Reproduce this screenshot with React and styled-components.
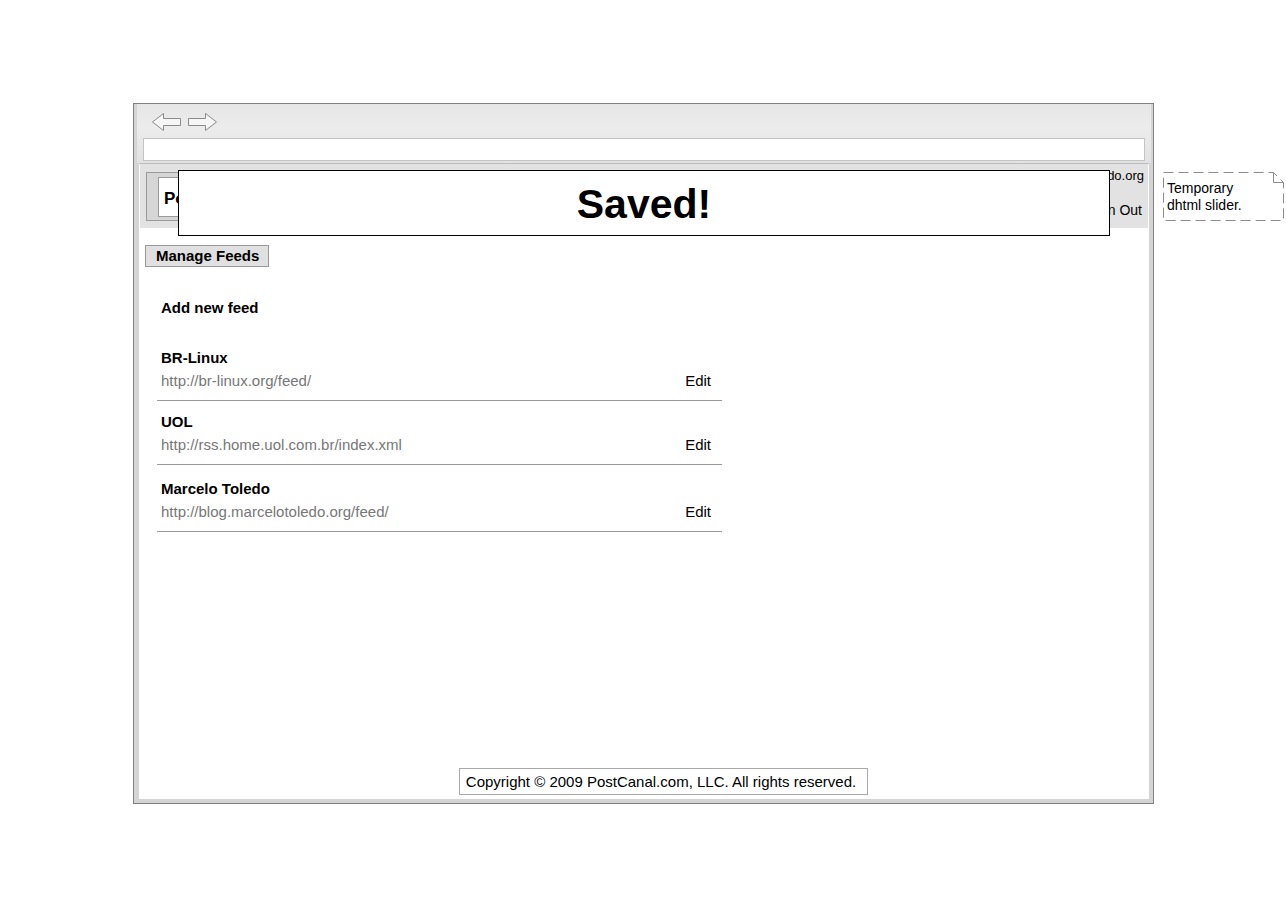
import React from "react";
import styled, { createGlobalStyle } from "styled-components";

const GlobalStyle = createGlobalStyle`
  body {
    margin: 0;
    background: #fff;
    font-family: "Liberation Sans", Arial, Helvetica, sans-serif;
    color: #000;
  }
`;

const feeds = [
  { name: "BR-Linux", url: "http://br-linux.org/feed/", top: 13, height: 65 },
  { name: "UOL", url: "http://rss.home.uol.com.br/index.xml", top: 12, height: 64 },
  { name: "Marcelo Toledo", url: "http://blog.marcelotoledo.org/feed/", top: 15, height: 67 },
];

const Arrow = ({ flip }) => (
  <svg width="29" height="18" viewBox="0 0 29 18" style={{ transform: flip ? "scaleX(-1)" : "none" }}>
    <polygon
      points="0.5,9 11.5,0.5 11.5,5.5 28.5,5.5 28.5,12.5 11.5,12.5 11.5,17.5"
      fill="#f6f6f6"
      stroke="#8a8a8a"
      strokeWidth="1"
    />
  </svg>
);

const App = () => {
  return (
    <>
      <GlobalStyle />
      <Page>
        <Frame>
          <Toolbar>
            <NavRow>
              <Arrow />
              <Arrow flip />
            </NavRow>
            <AddressBar />
          </Toolbar>
          <Content>
            <Header>
              <LogoBox>
                <LogoInner>PostCanal</LogoInner>
              </LogoBox>
              <UserBox>
                <UserEmail>marcelo@marcelotoledo.org</UserEmail>
                <SignOut>Sign Out</SignOut>
              </UserBox>
            </Header>
            <SavedBox>Saved!</SavedBox>

            <ManageButton>Manage Feeds</ManageButton>
            <AddFeed>Add new feed</AddFeed>

            <FeedList>
              {feeds.map((f) => (
                <FeedItem key={f.name} $top={f.top} $height={f.height}>
                  <FeedName>{f.name}</FeedName>
                  <FeedRow>
                    <FeedUrl>{f.url}</FeedUrl>
                    <EditLink>Edit</EditLink>
                  </FeedRow>
                </FeedItem>
              ))}
            </FeedList>

            <Footer>
              <Copyright>Copyright © 2009 PostCanal.com, LLC. All rights reserved.</Copyright>
            </Footer>
          </Content>
        </Frame>

        <Note>
          <svg width="121" height="49" viewBox="0 0 121 49" style={{ position: "absolute", left: 0, top: 0 }}>
            <path
              d="M0.5,0.5 H110.5 L120.5,10.5 V48.5 H0.5 Z"
              fill="none"
              stroke="#8c8c8c"
              strokeDasharray="10 5"
            />
            <path d="M110.5,0.5 V10.5 H120.5" fill="none" stroke="#8c8c8c" />
          </svg>
          <NoteText>
            Temporary
            <br />
            dhtml slider.
          </NoteText>
        </Note>
      </Page>
    </>
  );
};

export default App;

const Page = styled.div`
  display: flex;
  align-items: flex-start;
  gap: 9px;
  padding: 103px 0 0 133px;
`;

const Frame = styled.div`
  width: 1010px;
  border: 1px solid #808080;
  background: #d4d4d4;
  padding: 0 4px 4px 5px;
`;

const Toolbar = styled.div`
  height: 59px;
  box-sizing: border-box;
  margin: 0 -2px 0 -2px;
  padding: 0 6px 2px 6px;
  background: linear-gradient(#e6e6e6, #ececec 40%, #e2e2e2);
  display: flex;
  flex-direction: column;
`;

const NavRow = styled.div`
  height: 34px;
  display: flex;
  align-items: center;
  gap: 7px;
  padding-left: 9px;
  padding-top: 1px;
  box-sizing: border-box;
`;

const AddressBar = styled.div`
  height: 23px;
  box-sizing: border-box;
  background: #fff;
  border: 1px solid #c4c4c4;
`;

const Content = styled.div`
  position: relative;
  height: 636px;
  background: #fff;
  border-top: 1px solid #bdbdbd;
  box-sizing: border-box;
  display: flex;
  flex-direction: column;
`;

const Header = styled.div`
  height: 64px;
  margin: 0 1px;
  background: #e2e2e2;
  display: flex;
  justify-content: space-between;
  align-items: flex-start;
  padding: 8px 4px 0 6px;
  box-sizing: border-box;
`;

const LogoBox = styled.div`
  width: 220px;
  height: 49px;
  box-sizing: border-box;
  border: 1px solid #9a9a9a;
  background: #d6d6d6;
  padding: 4px 11px;
`;

const LogoInner = styled.div`
  height: 40px;
  box-sizing: border-box;
  background: #fff;
  border: 1px solid #9a9a9a;
  display: flex;
  align-items: center;
  padding: 3px 0 0 5px;
  font-size: 17px;
  font-weight: bold;
`;

const UserBox = styled.div`
  display: flex;
  flex-direction: column;
  align-items: flex-end;
  gap: 19px;
  margin-top: -4px;
`;

const UserEmail = styled.div`
  font-size: 13px;
  line-height: 15px;
`;

const SignOut = styled.div`
  font-size: 14px;
  line-height: 16px;
  margin-right: 2px;
`;

const SavedBox = styled.div`
  position: absolute;
  left: 39px;
  top: 6px;
  width: 932px;
  height: 66px;
  box-sizing: border-box;
  border: 1px solid #000;
  background: #fff;
  display: flex;
  align-items: center;
  justify-content: center;
  font-size: 41px;
  font-weight: bold;
  padding-top: 2px;
`;

const ManageButton = styled.div`
  align-self: flex-start;
  margin: 17px 0 0 6px;
  height: 22px;
  box-sizing: border-box;
  padding: 0 9px 0 10px;
  background: #e0e0e0;
  border: 1px solid #9a9a9a;
  font-size: 15px;
  font-weight: bold;
  line-height: 20px;
`;

const AddFeed = styled.div`
  margin: 32px 0 0 22px;
  font-size: 15px;
  font-weight: bold;
  line-height: 18px;
`;

const FeedList = styled.div`
  margin: 19px 0 0 18px;
  width: 565px;
`;

const FeedItem = styled.div`
  padding: ${(p) => p.$top}px 10px 0 4px;
  border-bottom: 1px solid #9a9a9a;
  height: ${(p) => p.$height}px;
  box-sizing: border-box;
`;

const FeedName = styled.div`
  font-size: 15px;
  font-weight: bold;
  line-height: 18px;
`;

const FeedRow = styled.div`
  display: flex;
  justify-content: space-between;
  margin-top: 5px;
  line-height: 18px;
  font-size: 15px;
`;

const FeedUrl = styled.span`
  color: #777;
`;

const EditLink = styled.span`
  color: #000;
  margin-right: 1px;
`;

const Footer = styled.div`
  margin-top: auto;
  margin-bottom: 4px;
  display: flex;
  justify-content: center;
  padding-left: 39px;
`;

const Copyright = styled.div`
  border: 1px solid #a8a8a8;
  padding: 4px 11px 4px 6px;
  font-size: 15px;
  line-height: 17px;
`;

const Note = styled.div`
  position: relative;
  margin-top: 69px;
  width: 121px;
  height: 49px;
`;

const NoteText = styled.div`
  position: relative;
  padding: 8px 0 0 4px;
  font-size: 14px;
  line-height: 17px;
`;
